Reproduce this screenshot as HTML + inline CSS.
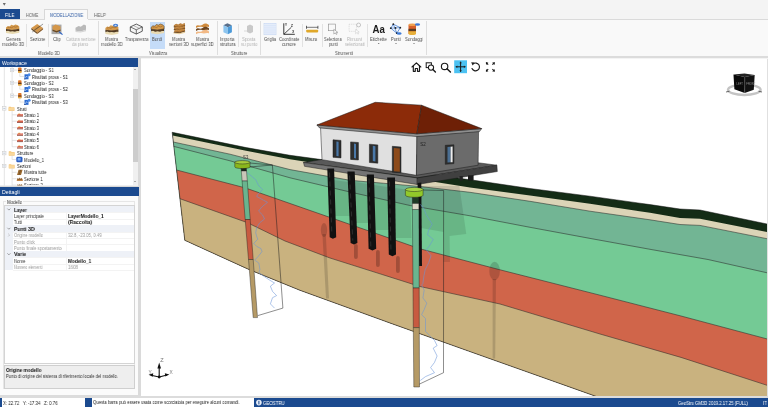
<!DOCTYPE html>
<html><head><meta charset="utf-8">
<style>
*{margin:0;padding:0;box-sizing:border-box}
html,body{width:768px;height:407px;overflow:hidden;background:#f4f4f4;font-family:"Liberation Sans", sans-serif;position:relative}
.a{position:absolute}
.t{position:absolute;white-space:pre;line-height:1;transform-origin:0 50%;will-change:transform}
svg{position:absolute;left:0;top:0;will-change:transform}
</style></head><body>
<!-- title/quick access -->

<!-- tabs -->
<div class="a" style="left:0;top:9.4px;width:19.5px;height:9.9px;background:#1b4a8f"></div>
<div class="a" style="left:44.3px;top:9.4px;width:44.2px;height:10.5px;background:#f9f9f9;border:0.6px solid #d8d8d8;border-bottom:none"></div>
<!-- ribbon -->
<div class="a" style="left:0;top:19.3px;width:768px;height:36.7px;background:#f9f9f9;border-top:0.6px solid #dadada"></div>
<div class="a" style="left:44.9px;top:19px;width:43px;height:1px;background:#f9f9f9"></div>
<div class="a" style="left:149.7px;top:21.6px;width:15.2px;height:27.4px;background:#c5dcf8"></div>
<!-- separators -->
<div class="a" style="left:26.3px;top:24px;width:0.7px;height:23px;background:#e2e2e2"></div>
<div class="a" style="left:47.9px;top:24px;width:0.7px;height:23px;background:#e2e2e2"></div>
<div class="a" style="left:97.8px;top:21px;width:0.8px;height:34px;background:#dedede"></div>
<div class="a" style="left:217px;top:21px;width:0.8px;height:34px;background:#dedede"></div>
<div class="a" style="left:238px;top:24px;width:0.7px;height:23px;background:#e2e2e2"></div>
<div class="a" style="left:260.2px;top:21px;width:0.8px;height:34px;background:#dedede"></div>
<div class="a" style="left:302px;top:24px;width:0.7px;height:23px;background:#e2e2e2"></div>
<div class="a" style="left:321.5px;top:24px;width:0.7px;height:23px;background:#e2e2e2"></div>
<div class="a" style="left:367px;top:24px;width:0.7px;height:23px;background:#e2e2e2"></div>
<div class="a" style="left:425.7px;top:21px;width:0.8px;height:34px;background:#dedede"></div>
<!-- ribbon bottom band -->
<div class="a" style="left:0;top:56px;width:768px;height:2.4px;background:#dcdcdc"></div>
<!-- left panel background -->
<div class="a" style="left:0;top:58.4px;width:141px;height:339px;background:#f0f0f0"></div>
<!-- workspace header -->
<div class="a" style="left:0;top:58.4px;width:138.8px;height:8.3px;background:#1b4a8f"></div>
<!-- tree -->
<div class="a" style="left:0;top:66.7px;width:138.4px;height:118.8px;background:#ffffff"></div>
<div class="a" style="left:132.7px;top:66.7px;width:5.7px;height:118.8px;background:#f0f0f0"></div>
<div class="a" style="left:133.2px;top:89px;width:4.7px;height:73.4px;background:#cdcdcd"></div>
<div class="a" style="left:138.4px;top:58.4px;width:2.6px;height:339px;background:#dadada"></div>
<!-- tree scroll arrows -->
<div class="a" style="left:134.2px;top:69.3px;width:0;height:0;border-left:1.4px solid transparent;border-right:1.4px solid transparent;border-bottom:1.5px solid #666"></div>
<div class="a" style="left:134.2px;top:180.9px;width:0;height:0;border-left:1.4px solid transparent;border-right:1.4px solid transparent;border-top:1.5px solid #666"></div>
<!-- separator between tree & dettagli -->
<div class="a" style="left:0;top:185.5px;width:138.4px;height:1.6px;background:#d8d8d8"></div>
<!-- dettagli header -->
<div class="a" style="left:0;top:187.1px;width:138.8px;height:8.6px;background:#1b4a8f"></div>
<div class="a" style="left:0;top:195.7px;width:138.4px;height:199.3px;background:#fbfbfb"></div>
<!-- groupbox -->
<div class="a" style="left:3.1px;top:201.3px;width:132px;height:188px;border:0.6px solid #e6e6e6"></div>
<div class="a" style="left:6px;top:199px;width:16.5px;height:5px;background:#fbfbfb"></div>
<!-- property grid -->
<div class="a" style="left:4.2px;top:205.2px;width:130.6px;height:158.6px;background:#ffffff;border:0.6px solid #d4d4d4"></div>
<div class="a" style="left:4.8px;top:205.8px;width:8.6px;height:64.4px;background:#eef1f7"></div>
<div class="a" style="left:4.8px;top:205.80px;width:129.4px;height:6.89px;background:#eef1f7"></div>
<div class="a" style="left:13.4px;top:212.44px;width:120.8px;height:0.5px;background:#f3f3f3"></div>
<div class="a" style="left:66.3px;top:212.69px;width:0.5px;height:6.39px;background:#f3f3f3"></div>
<div class="a" style="left:13.4px;top:218.83px;width:120.8px;height:0.5px;background:#f3f3f3"></div>
<div class="a" style="left:66.3px;top:219.08px;width:0.5px;height:6.39px;background:#f3f3f3"></div>
<div class="a" style="left:13.4px;top:225.22px;width:120.8px;height:0.5px;background:#f3f3f3"></div>
<div class="a" style="left:4.8px;top:225.47px;width:129.4px;height:6.39px;background:#eef1f7"></div>
<div class="a" style="left:13.4px;top:231.61px;width:120.8px;height:0.5px;background:#f3f3f3"></div>
<div class="a" style="left:66.3px;top:231.86px;width:0.5px;height:6.39px;background:#f3f3f3"></div>
<div class="a" style="left:13.4px;top:238.00px;width:120.8px;height:0.5px;background:#f3f3f3"></div>
<div class="a" style="left:66.3px;top:238.25px;width:0.5px;height:6.39px;background:#f3f3f3"></div>
<div class="a" style="left:13.4px;top:244.39px;width:120.8px;height:0.5px;background:#f3f3f3"></div>
<div class="a" style="left:66.3px;top:244.64px;width:0.5px;height:6.39px;background:#f3f3f3"></div>
<div class="a" style="left:13.4px;top:250.78px;width:120.8px;height:0.5px;background:#f3f3f3"></div>
<div class="a" style="left:4.8px;top:251.03px;width:129.4px;height:6.39px;background:#eef1f7"></div>
<div class="a" style="left:13.4px;top:257.17px;width:120.8px;height:0.5px;background:#f3f3f3"></div>
<div class="a" style="left:66.3px;top:257.42px;width:0.5px;height:6.39px;background:#f3f3f3"></div>
<div class="a" style="left:13.4px;top:263.56px;width:120.8px;height:0.5px;background:#f3f3f3"></div>
<div class="a" style="left:66.3px;top:263.81px;width:0.5px;height:6.39px;background:#f3f3f3"></div>
<div class="a" style="left:13.4px;top:269.95px;width:120.8px;height:0.5px;background:#f3f3f3"></div>
<svg width="768" height="407" viewBox="0 0 768 407" style="position:absolute;left:0;top:0"><polyline points="7.4,208.60 8.9,210.10 10.4,208.60" fill="none" stroke="#666" stroke-width="0.6"/><polyline points="7.4,227.77 8.9,229.27 10.4,227.77" fill="none" stroke="#666" stroke-width="0.6"/><polyline points="7.4,253.33 8.9,254.83 10.4,253.33" fill="none" stroke="#666" stroke-width="0.6"/><polyline points="8.2,233.66 9.6,235.06 8.2,236.46" fill="none" stroke="#aaa" stroke-width="0.6"/></svg>
<!-- description box -->
<div class="a" style="left:4.2px;top:365px;width:130.6px;height:23.8px;background:#eeeeee;border:0.6px solid #cfcfcf"></div>
<!-- bottom panel band -->
<div class="a" style="left:0;top:395px;width:768px;height:3px;background:#dcdcdc"></div>
<!-- viewport -->
<div class="a" style="left:141px;top:58.5px;width:627px;height:337.5px;background:#ffffff"></div>
<div class="a" style="left:767px;top:58.5px;width:1px;height:337.5px;background:#e0e0e0"></div>
<!-- status bar -->
<div class="a" style="left:0;top:398px;width:768px;height:9px;background:#1b4a8f"></div>
<div class="a" style="left:2px;top:398px;width:82.6px;height:9px;background:#ffffff"></div>
<div class="a" style="left:91.8px;top:398px;width:162.2px;height:9px;background:#ffffff"></div>

<svg width="768" height="407" viewBox="0 0 768 407">
<defs><clipPath id="vp"><rect x="141" y="58.5" width="626" height="337.5"/></clipPath></defs>
<g clip-path="url(#vp)">
<polygon points="172.2,132.3 246.2,147.6 290.0,155.3 474.0,180.3 530.0,188.5 590.0,196.2 650.0,204.6 680.0,209.0 700.0,210.0 768.0,224.2 768.0,470.0 768.0,460.0 640.0,412.0 548.0,379.3 470.0,351.6 390.0,323.0 300.0,290.3 248.8,269.4 184.8,240.3" fill="#142c16"/>
<polygon points="172.6,135.4 246.0,150.8 290.0,159.2 470.0,187.4 530.0,195.5 590.0,203.8 650.0,212.8 680.0,217.9 700.0,218.8 768.0,232.3 768.0,470.0 768.0,460.0 640.0,412.0 548.0,379.3 470.0,351.6 390.0,323.0 300.0,290.3 248.8,269.4 184.8,240.3" fill="#dbd4b7"/>
<polygon points="173.3,142.0 230.0,154.2 290.0,169.6 350.0,180.3 420.0,186.5 470.0,192.3 530.0,201.3 590.0,211.2 650.0,219.8 680.0,224.5 700.0,225.4 768.0,238.9 768.0,470.0 768.0,460.0 640.0,412.0 548.0,379.3 470.0,351.6 390.0,323.0 300.0,290.3 248.8,269.4 184.8,240.3" fill="#72b594"/>
<polygon points="173.8,146.4 230.0,160.8 290.0,177.8 350.0,192.0 410.0,205.5 470.0,215.8 530.0,227.3 590.0,238.4 650.0,249.3 708.0,259.5 768.0,273.0 768.0,470.0 768.0,460.0 640.0,412.0 548.0,379.3 470.0,351.6 390.0,323.0 300.0,290.3 248.8,269.4 184.8,240.3" fill="#74ca95"/>
<polygon points="176.6,170.0 245.0,187.8 420.0,248.8 500.0,269.8 600.0,295.2 681.0,316.0 768.0,339.2 768.0,470.0 768.0,460.0 640.0,412.0 548.0,379.3 470.0,351.6 390.0,323.0 300.0,290.3 248.8,269.4 184.8,240.3" fill="#d0654a"/>
<polygon points="179.9,198.7 247.0,222.5 285.0,241.0 330.0,258.0 420.0,286.5 500.0,304.0 600.0,334.0 681.0,357.4 768.0,385.6 768.0,470.0 768.0,460.0 640.0,412.0 548.0,379.3 470.0,351.6 390.0,323.0 300.0,290.3 248.8,269.4 184.8,240.3" fill="#c9b27f"/>
<polygon points="334.0,180.0 348.0,182.0 349.5,216.0 335.0,216.0" fill="#000" fill-opacity="0.1"/>
<polygon points="355.0,182.0 368.0,184.0 369.5,223.0 356.0,223.0" fill="#000" fill-opacity="0.1"/>
<polygon points="374.0,185.0 388.0,187.0 389.5,230.0 375.0,230.0" fill="#000" fill-opacity="0.1"/>
<polygon points="395.0,188.0 410.0,190.0 411.5,238.0 396.0,238.0" fill="#000" fill-opacity="0.1"/>
<polygon points="421.0,186.0 459.4,186.0 466.3,234.0 449.6,236.0 450.0,262.0 443.5,262.0 443.5,232.0 421.0,228.0" fill="#000" fill-opacity="0.1"/>
<rect x="354" y="244" width="3.8" height="15" rx="1.9" fill="#000" fill-opacity="0.22"/>
<rect x="376" y="250" width="3.8" height="17" rx="1.9" fill="#000" fill-opacity="0.22"/>
<rect x="396" y="256" width="3.8" height="17" rx="1.9" fill="#000" fill-opacity="0.22"/>
<ellipse cx="324" cy="230" rx="3.2" ry="7" fill="#000" fill-opacity="0.16"/>
<polygon points="322.4,234.0 325.8,234.0 329.0,298.5 326.0,298.5" fill="#000" fill-opacity="0.15"/>
<ellipse cx="494.6" cy="271" rx="5.3" ry="9.3" fill="#000" fill-opacity="0.16"/>
<polygon points="492.6,279.0 496.0,279.0 495.2,358.5 492.6,358.5" fill="#000" fill-opacity="0.14"/>
<polyline points="173.3,142.0 230.0,154.2 290.0,169.6 350.0,180.3 420.0,186.5 470.0,192.3 530.0,201.3 590.0,211.2 650.0,219.8 680.0,224.5 700.0,225.4 768.0,238.9" fill="none" stroke="#2a2a2a" stroke-width="0.55"/>
<polyline points="173.8,146.4 230.0,160.8 290.0,177.8 350.0,192.0 410.0,205.5 470.0,215.8 530.0,227.3 590.0,238.4 650.0,249.3 708.0,259.5 768.0,273.0" fill="none" stroke="#2a2a2a" stroke-width="0.55"/>
<polyline points="176.6,170.0 245.0,187.8 420.0,248.8 500.0,269.8 600.0,295.2 681.0,316.0 768.0,339.2" fill="none" stroke="#2a2a2a" stroke-width="0.55"/>
<polyline points="179.9,198.7 247.0,222.5 285.0,241.0 330.0,258.0 420.0,286.5 500.0,304.0 600.0,334.0 681.0,357.4 768.0,385.6" fill="none" stroke="#2a2a2a" stroke-width="0.55"/>
<polyline points="184.8,240.3 248.8,269.4 300.0,290.3 390.0,323.0 470.0,351.6 548.0,379.3 640.0,412.0 768.0,460.0" fill="none" stroke="#222" stroke-width="0.65"/>
<polyline points="172.2,132.3 184.8,240.3" fill="none" stroke="#222" stroke-width="0.65"/>
<polyline points="172.2,132.3 246.2,147.6 290.0,155.3 474.0,180.3 530.0,188.5 590.0,196.2 650.0,204.6 680.0,209.0 700.0,210.0 768.0,224.2" fill="none" stroke="#111" stroke-width="0.5"/>
<g stroke="#1a1a1a" stroke-width="0.5" stroke-linejoin="round">
<polygon points="303.5,162.5 380.0,150.0 496.9,165.2 417.2,177.9" fill="#595959"/>
<polygon points="303.5,162.5 417.2,177.9 417.2,184.5 304.5,166.3" fill="#747474"/>
<polygon points="417.2,177.9 496.9,165.2 497.3,171.5 417.2,184.5" fill="#404040"/>
<polygon points="320.5,127.0 416.9,135.5 416.4,175.3 322.0,159.7" fill="#e0e0e0"/>
<polygon points="416.9,135.5 478.6,131.0 478.1,165.2 416.4,175.3" fill="#6b6b6b"/>
<polygon points="333.0,139.8 341.0,140.4 341.0,157.9 333.0,157.3" fill="#2e2e2e"/>
<polygon points="336.4,141.4 338.6,141.8 338.6,156.3 336.4,155.9" fill="#4a78a8" stroke="none"/>
<polygon points="350.6,141.9 358.4,142.5 358.4,160.0 350.6,159.4" fill="#2e2e2e"/>
<polygon points="354.0,143.5 356.0,143.9 356.0,158.4 354.0,158.0" fill="#4a78a8" stroke="none"/>
<polygon points="369.4,144.2 377.8,144.9 377.8,163.2 369.4,162.5" fill="#2e2e2e"/>
<polygon points="372.8,145.8 375.4,146.3 375.4,161.6 372.8,161.1" fill="#4a78a8" stroke="none"/>
<polygon points="392.3,146.3 401.0,147.0 401.0,172.8 392.3,172.2" fill="#2e2e2e"/>
<polygon points="393.8,148.0 399.8,148.5 399.8,171.8 393.8,171.3" fill="#8c4a1a" stroke="none"/>
<polygon points="445.3,145.3 453.9,144.8 453.9,163.6 445.3,164.3" fill="#2e2e2e"/>
<polygon points="447.5,147.0 450.6,146.8 450.6,162.3 447.5,162.6" fill="#4a6e92" stroke="none"/>
<polygon points="450.6,146.8 452.6,146.6 452.6,162.2 450.6,162.3" fill="#ececec" stroke="none"/>
<polygon points="316.9,125.0 416.9,133.8 481.7,128.6 479.5,131.6 416.9,136.6 319.5,127.9" fill="#8e8e8e"/>
<polygon points="316.9,125.0 375.2,102.3 421.6,105.2 416.9,133.8" fill="#8c2b09"/>
<polygon points="421.6,105.2 481.7,128.6 416.9,133.8" fill="#6e2006"/>
</g>
<text x="0" y="0" font-size="5.4" fill="#202020" font-family="Liberation Sans" transform="translate(420.2,146.1) scale(0.82,1)">S2</text>
<polygon points="327.3,168.5 334.1,168.5 336.2,237.2 332.9,238.8 329.7,237.2" fill="#111"/>
<line x1="329.5" y1="172.5" x2="331.9" y2="234.8" stroke="#4a4a4a" stroke-width="0.5" stroke-dasharray="5,4"/>
<polygon points="347.4,171.5 354.7,171.5 357.4,243.0 354.0,244.6 350.6,243.0" fill="#111"/>
<line x1="349.6" y1="175.5" x2="352.8" y2="240.6" stroke="#4a4a4a" stroke-width="0.5" stroke-dasharray="5,4"/>
<polygon points="366.8,174.5 373.9,174.5 376.2,248.8 372.4,250.4 368.6,248.8" fill="#111"/>
<line x1="369.0" y1="178.5" x2="370.8" y2="246.4" stroke="#4a4a4a" stroke-width="0.5" stroke-dasharray="5,4"/>
<polygon points="387.2,177.5 395.0,177.5 396.0,254.6 392.4,256.2 388.8,254.6" fill="#111"/>
<line x1="389.4" y1="181.5" x2="391.0" y2="252.2" stroke="#4a4a4a" stroke-width="0.5" stroke-dasharray="5,4"/>
<polygon points="417.6,183.0 421.3,182.5 422.0,266.0 418.2,266.0" fill="#111"/>
<polygon points="459.5,176.0 462.8,176.0 462.8,180.6 459.5,180.8" fill="#222"/>
<polygon points="468.0,175.5 473.6,175.0 473.6,180.3 468.0,180.5" fill="#1a1a1a"/>
<polygon points="246.0,315.9 257.5,315.9 282.5,308.2 272.8,164.8" fill="none"/>
<polyline points="249.6,163.0 272.4,165.0 282.9,308.1 257.8,315.6" fill="none" stroke="#1e1e1e" stroke-width="0.5"/>
<polyline points="249.6,167.0 272.4,165.0" fill="none" stroke="#1e1e1e" stroke-width="0.5"/>
<polyline points="245.9,171.8 249.8,174.7 255.7,179.7 258.6,185.6 262.6,189.5 257.7,194.4 256.7,196.4 263.6,200.3 267.5,202.3 261.6,207.2 258.6,211.1 262.6,215.0 264.5,219.0 259.6,222.9 256.7,227.8 255.7,232.7 256.7,236.5 257.8,239.2 253.7,243.4 256.8,246.5 261.0,248.6 262.0,251.7 257.8,256.9 254.7,260.1 258.9,263.2 259.9,269.5 258.9,272.6 263.0,275.7 269.3,279.9 274.5,283.0 270.4,286.2 272.5,291.4 276.6,295.6 272.5,297.7 270.4,303.9 274.5,308.1" fill="none" stroke="#6a95d8" stroke-width="0.55" stroke-linejoin="round"/>
<polyline points="423.0,190.0 443.6,190.5 443.5,372.7 419.0,384.3" fill="none" stroke="#1e1e1e" stroke-width="0.5"/>
<polyline points="420.5,204.3 424.0,209.0 426.3,214.8 432.2,224.2 428.7,230.0 427.5,234.7 433.3,239.4 429.8,245.2 426.3,249.9 431.0,255.7 428.7,262.7 425.2,269.7 424.0,275.5 422.8,283.7 421.6,285.0 424.2,290.2 422.9,297.9 426.8,303.1 424.2,309.5 421.6,314.7 425.5,318.5 425.5,326.3 425.5,331.4 429.4,335.3 434.5,340.5 437.1,345.6 433.2,348.2 437.1,356.0 434.5,362.4 430.6,367.6 434.5,372.7 425.5,376.6 420.3,380.5" fill="none" stroke="#6a95d8" stroke-width="0.55" stroke-linejoin="round"/>
<polygon points="241.0,167.7 246.3,167.7 246.5,171.0 241.3,171.0" fill="#1d2a1d" stroke="#1a1a1a" stroke-width="0.4"/>
<polygon points="241.3,171.0 246.5,171.0 247.3,181.0 242.1,181.0" fill="#c9c6b8" stroke="#1a1a1a" stroke-width="0.4"/>
<polygon points="242.1,181.0 247.3,181.0 250.2,219.5 245.2,219.5" fill="#6ab48e" stroke="#1a1a1a" stroke-width="0.4"/>
<polygon points="245.2,219.5 250.2,219.5 253.2,259.5 248.5,259.5" fill="#c85a40" stroke="#1a1a1a" stroke-width="0.4"/>
<polygon points="248.5,259.5 253.2,259.5 257.5,317.6 253.2,317.6" fill="#b59a66" stroke="#1a1a1a" stroke-width="0.4"/>
<polygon points="412.3,197.2 418.9,197.2 418.9,203.5 412.3,203.5" fill="#1f3a25" stroke="#1a1a1a" stroke-width="0.4"/>
<polygon points="412.3,203.5 418.9,203.5 418.9,210.0 412.4,210.0" fill="#dcd8c6" stroke="#1a1a1a" stroke-width="0.4"/>
<polygon points="412.4,209.5 418.9,209.5 419.2,288.0 413.0,288.0" fill="#6ab58f" stroke="#1a1a1a" stroke-width="0.4"/>
<polygon points="413.0,288.0 419.2,288.0 419.3,327.6 413.3,327.6" fill="#c85a40" stroke="#1a1a1a" stroke-width="0.4"/>
<polygon points="413.3,327.6 419.3,327.6 419.5,387.0 413.8,387.0" fill="#b59a66" stroke="#1a1a1a" stroke-width="0.4"/>
<path d="M234.8,162.28 L234.8,166.92000000000002 A7.599999999999994,1.68 0 0 0 250,166.92000000000002 L250,162.28 Z" fill="#8ab61c" stroke="#1a1a1a" stroke-width="0.45"/>
<ellipse cx="242.4" cy="162.28" rx="7.599999999999994" ry="1.68" fill="#a8cc3c" stroke="#1a1a1a" stroke-width="0.45"/>
<path d="M405.4,189.479 L405.4,195.221 A8.850000000000023,2.079000000000001 0 0 0 423.1,195.221 L423.1,189.479 Z" fill="#92c92a" stroke="#1a1a1a" stroke-width="0.45"/>
<ellipse cx="414.25" cy="189.479" rx="8.850000000000023" ry="2.079000000000001" fill="#a6d443" stroke="#1a1a1a" stroke-width="0.45"/>
<text x="0" y="0" font-size="5" fill="#3a3a3a" font-family="Liberation Sans" transform="translate(243.1,158.8) scale(0.85,1)">S3</text>
</g>
</svg>

<svg width="768" height="407" viewBox="0 0 768 407">
<g transform="translate(6.0,24.4) scale(1.02,0.92)"><polygon points="0.00,3.40 1.80,1.80 3.60,2.20 5.20,0.50 7.40,1.10 9.20,0.00 11.60,0.80 13.00,2.40 13.00,5.00 6.50,6.20 0.00,5.20" fill="#d49a4c"/><polygon points="0.00,5.00 6.50,6.00 13.00,4.80 13.00,7.40 6.50,8.60 0.00,7.60" fill="#4a3620"/><polygon points="0.00,7.40 2.00,7.00 4.00,7.80 6.50,7.40 9.00,8.00 11.00,7.20 13.00,7.20 13.00,9.20 6.50,10.40 0.00,9.40" fill="#e8d9b0"/><polyline points="1.50,3.40 3.50,3.00 5.50,3.60 7.50,2.40 9.50,3.00 11.50,2.20" fill="none" stroke="#9a6226" stroke-width="0.6"/><polyline points="0.50,6.20 3.00,5.60 5.00,6.60 8.00,5.80 10.50,6.40 12.50,5.60" fill="none" stroke="#7a5228" stroke-width="0.5"/></g>
<g transform="translate(31.3,24) scale(0.98,1.0)"><polygon points="0.00,4.00 6.00,0.00 12.00,4.00 6.00,8.50" fill="#d4974a"/><polygon points="0.00,4.00 6.00,8.50 6.00,10.00 0.00,5.50" fill="#6b4a22"/><polygon points="6.00,8.50 12.00,4.00 12.00,5.50 6.00,10.00" fill="#8a5a25"/><line x1="1" y1="8" x2="12" y2="0" stroke="#555" stroke-width="0.6"/><line x1="3" y1="6" x2="9" y2="2" stroke="#6b4a22" stroke-width="0.6"/></g>
<g transform="translate(51.5,23.6) scale(1.0,1.0)"><rect x="0" y="1" width="10" height="9.5" fill="#a9a9a9"/><polygon points="1.00,3.00 4.00,1.00 7.00,2.00 9.00,3.00 9.00,6.00 5.00,7.50 1.00,6.00" fill="#d4974a"/><polygon points="1.00,6.00 5.00,7.50 9.00,6.00 9.00,7.50 5.00,9.00 1.00,7.50" fill="#6b4a22"/><line x1="7.5" y1="8" x2="11" y2="11" stroke="#2a63c8" stroke-width="1.2"/></g>
<g transform="translate(75.5,24) scale(1.05,0.95)"><polygon points="0.00,4.00 3.00,2.00 5.00,3.00 8.00,0.50 10.00,1.50 10.00,6.00 5.00,8.00 0.00,7.00" fill="#b9b9b9"/><polygon points="0.00,7.00 5.00,8.00 10.00,6.00 10.00,7.50 5.00,9.00 0.00,8.50" fill="#d5d5d5"/></g>
<g transform="translate(105.4,24.8) scale(1.0,0.97)"><polygon points="0.00,3.40 1.80,1.80 3.60,2.20 5.20,0.50 7.40,1.10 9.20,0.00 11.60,0.80 13.00,2.40 13.00,5.00 6.50,6.20 0.00,5.20" fill="#d49a4c"/><polygon points="0.00,5.00 6.50,6.00 13.00,4.80 13.00,7.40 6.50,8.60 0.00,7.60" fill="#4a3620"/><polygon points="0.00,7.40 2.00,7.00 4.00,7.80 6.50,7.40 9.00,8.00 11.00,7.20 13.00,7.20 13.00,9.20 6.50,10.40 0.00,9.40" fill="#e8d9b0"/><polyline points="1.50,3.40 3.50,3.00 5.50,3.60 7.50,2.40 9.50,3.00 11.50,2.20" fill="none" stroke="#9a6226" stroke-width="0.6"/><polyline points="0.50,6.20 3.00,5.60 5.00,6.60 8.00,5.80 10.50,6.40 12.50,5.60" fill="none" stroke="#7a5228" stroke-width="0.5"/></g>
<ellipse cx="115.6" cy="25.3" rx="2.6" ry="1.5" fill="#3d7bd8"/><ellipse cx="115.6" cy="25.3" rx="1.2" ry="0.6" fill="#cfe0fa"/>
<g transform="translate(130.3,23.6) scale(1.0,0.95)"><polygon points="0.00,3.50 6.00,0.50 12.00,3.50 12.00,8.00 6.00,11.00 0.00,8.00" fill="#f4f4f4" stroke="#333" stroke-width="0.8"/><polyline points="0.00,3.50 6.00,6.50 12.00,3.50" fill="none" stroke="#333" stroke-width="0.7"/><line x1="6" y1="6.5" x2="6" y2="11" stroke="#333" stroke-width="0.7"/><polyline points="3.00,2.00 9.00,5.00" fill="none" stroke="#777" stroke-width="0.5"/></g>
<g transform="translate(151.1,24.0) scale(1.0,0.98)"><polygon points="0.00,3.40 1.80,1.80 3.60,2.20 5.20,0.50 7.40,1.10 9.20,0.00 11.60,0.80 13.00,2.40 13.00,5.00 6.50,6.20 0.00,5.20" fill="#d49a4c" stroke="#4a3218" stroke-width="0.5"/><polygon points="0.00,5.00 6.50,6.00 13.00,4.80 13.00,7.40 6.50,8.60 0.00,7.60" fill="#4a3620"/><polygon points="0.00,7.40 2.00,7.00 4.00,7.80 6.50,7.40 9.00,8.00 11.00,7.20 13.00,7.20 13.00,9.20 6.50,10.40 0.00,9.40" fill="#e8d9b0"/><polyline points="1.50,3.40 3.50,3.00 5.50,3.60 7.50,2.40 9.50,3.00 11.50,2.20" fill="none" stroke="#9a6226" stroke-width="0.6"/><polyline points="0.50,6.20 3.00,5.60 5.00,6.60 8.00,5.80 10.50,6.40 12.50,5.60" fill="none" stroke="#7a5228" stroke-width="0.5"/></g>
<g transform="translate(173,23) scale(1.05,1.0)"><polygon points="0.80,2.20 3.00,0.80 5.00,1.40 7.00,0.20 9.00,0.90 11.20,0.00 11.50,2.80 6.00,4.60 0.80,4.00" fill="#b07534"/><polyline points="1.50,2.60 4.00,1.80 6.00,2.40 8.50,1.60 10.80,1.20" fill="none" stroke="#d9a25a" stroke-width="0.6"/><polyline points="0.80,4.00 6.00,4.60 11.50,2.80" fill="none" stroke="#4e3216" stroke-width="0.9"/><polygon points="1.10,4.90 3.00,3.50 5.00,4.10 7.00,2.90 9.00,3.60 11.20,2.70 11.50,5.50 6.00,7.30 0.80,6.70" fill="#b07534"/><polyline points="1.50,5.30 4.00,4.50 6.00,5.10 8.50,4.30 10.80,3.90" fill="none" stroke="#d9a25a" stroke-width="0.6"/><polyline points="0.80,6.70 6.00,7.30 11.50,5.50" fill="none" stroke="#4e3216" stroke-width="0.9"/><polygon points="1.40,7.60 3.00,6.20 5.00,6.80 7.00,5.60 9.00,6.30 11.20,5.40 11.50,8.20 6.00,10.00 0.80,9.40" fill="#b07534"/><polyline points="1.50,8.00 4.00,7.20 6.00,7.80 8.50,7.00 10.80,6.60" fill="none" stroke="#d9a25a" stroke-width="0.6"/><polyline points="0.80,9.40 6.00,10.00 11.50,8.20" fill="none" stroke="#4e3216" stroke-width="0.9"/><polygon points="0.50,9.60 6.00,10.30 11.50,8.60 11.50,9.80 6.00,11.20 0.50,10.60" fill="#e8cf9e"/></g>
<g transform="translate(196,23.6) scale(1.0,0.95)"><path d="M0,2.6 C2,0.2 4,3.4 6.5,1.2 S11,0.0 13,1.6 L13,3.8 C11,2.4 9,4.2 6.5,3.6 S2,3.2 0,4.6 Z" fill="#cf8a3c"/><path d="M0,5.9 C2,3.5 4,6.699999999999999 6.5,4.5 S11,3.3 13,4.9 L13,7.1 C11,5.699999999999999 9,7.5 6.5,6.9 S2,6.5 0,7.8999999999999995 Z" fill="#6e4620"/><path d="M0,9.2 C2,6.8 4,10.0 6.5,7.8 S11,6.6 13,8.2 L13,10.399999999999999 C11,9.0 9,10.8 6.5,10.2 S2,9.8 0,11.2 Z" fill="#f2b985"/></g>
<g transform="translate(223.4,23.2) scale(1.0,1.0)"><polygon points="0.00,2.00 4.00,0.00 8.50,2.00 4.50,4.00" fill="#5a6f8a"/><polygon points="0.00,2.00 4.50,4.00 4.50,11.00 0.00,9.00" fill="#8cc4ee"/><polygon points="4.50,4.00 8.50,2.00 8.50,9.00 4.50,11.00" fill="#4d9ad8"/></g>
<g transform="translate(244,24) scale(1.0,1.0)"><polygon points="3.00,2.00 6.00,0.50 9.00,2.00 9.00,8.00 6.00,9.50 3.00,8.00" fill="#c9c9c9"/><line x1="0" y1="7" x2="4" y2="7" stroke="#ccc" stroke-width="0.7"/></g>
<g transform="translate(264,23.3) scale(1.0,1.0)"><rect x="0" y="0" width="12" height="11.5" fill="#fbfcff" stroke="#b5cbee" stroke-width="0.5"/><line x1="2" y1="0" x2="2" y2="11.5" stroke="#bcd0f0" stroke-width="0.5"/><line x1="0" y1="1.92" x2="12" y2="1.92" stroke="#bcd0f0" stroke-width="0.5"/><line x1="4" y1="0" x2="4" y2="11.5" stroke="#bcd0f0" stroke-width="0.5"/><line x1="0" y1="3.84" x2="12" y2="3.84" stroke="#bcd0f0" stroke-width="0.5"/><line x1="6" y1="0" x2="6" y2="11.5" stroke="#bcd0f0" stroke-width="0.5"/><line x1="0" y1="5.76" x2="12" y2="5.76" stroke="#bcd0f0" stroke-width="0.5"/><line x1="8" y1="0" x2="8" y2="11.5" stroke="#bcd0f0" stroke-width="0.5"/><line x1="0" y1="7.68" x2="12" y2="7.68" stroke="#bcd0f0" stroke-width="0.5"/><line x1="10" y1="0" x2="10" y2="11.5" stroke="#bcd0f0" stroke-width="0.5"/><line x1="0" y1="9.6" x2="12" y2="9.6" stroke="#bcd0f0" stroke-width="0.5"/></g>
<g transform="translate(282.8,23.3) scale(1.0,1.0)"><polyline points="1.00,0.00 1.00,11.00 12.00,11.00" fill="none" stroke="#222" stroke-width="0.9"/><line x1="1" y1="11" x2="8.5" y2="4" stroke="#222" stroke-width="0.8"/><text x="2.2" y="2.6" font-size="3" fill="#222" font-family="Liberation Sans" font-weight="700">Y</text><text x="8.2" y="3.8" font-size="3" fill="#222" font-family="Liberation Sans" font-weight="700">Z</text><text x="9.5" y="10.2" font-size="3" fill="#222" font-family="Liberation Sans" font-weight="700">X</text></g>
<g transform="translate(306.2,25.8) scale(1.0,1.0)"><line x1="0.3" y1="0" x2="0.3" y2="3" stroke="#222" stroke-width="0.7"/><line x1="11.7" y1="0" x2="11.7" y2="3" stroke="#222" stroke-width="0.7"/><line x1="0.3" y1="1.5" x2="11.7" y2="1.5" stroke="#222" stroke-width="0.6"/><rect x="0" y="4" width="12" height="2.6" rx="0.8" fill="#e0a82a"/></g>
<g transform="translate(327.8,23.6) scale(1.0,0.95)"><rect x="0.5" y="0.5" width="7" height="7" fill="none" stroke="#888" stroke-width="0.6"/><polygon points="6.00,6.00 6.00,11.00 7.30,9.80 8.50,11.50 9.30,11.00 8.20,9.30 10.00,9.20" fill="#fff" stroke="#777" stroke-width="0.5"/></g>
<g transform="translate(348.6,22.8) scale(1.0,0.95)"><rect x="0.5" y="1.5" width="7.5" height="7.5" fill="none" stroke="#c8c8c8" stroke-width="0.6" stroke-dasharray="1,0.8"/><circle cx="10" cy="2.3" r="2" fill="none" stroke="#bdbdbd" stroke-width="0.9"/><polygon points="7.00,7.00 7.00,11.50 8.20,10.30 9.30,12.00 10.00,11.60 9.00,9.80 10.60,9.70" fill="#fff" stroke="#c5c5c5" stroke-width="0.5"/></g>
<text x="0" y="0" font-size="10.4" font-weight="700" fill="#1a1a1a" font-family="Liberation Sans" transform="translate(372.6,32.6) scale(0.93,1)">Aa</text>
<g transform="translate(390.3,23.2) scale(1.0,1.0)"><polyline points="3.00,1.00 10.00,4.50 6.50,10.00 0.50,5.00 3.00,1.00 6.50,10.00" fill="none" stroke="#2c6fd0" stroke-width="0.7"/><line x1="0.5" y1="5" x2="10" y2="4.5" stroke="#2c6fd0" stroke-width="0.6"/><circle cx="3" cy="1" r="0.9" fill="#222"/><circle cx="10" cy="4.5" r="0.9" fill="#222"/><circle cx="6.5" cy="10" r="0.9" fill="#222"/><circle cx="0.5" cy="5" r="0.9" fill="#222"/><circle cx="5.2" cy="4.8" r="0.9" fill="#222"/><ellipse cx="8.8" cy="10.3" rx="2.5" ry="1.3" fill="#3d7bd8"/></g>
<g transform="translate(408.5,23.3) scale(1.0,1.0)"><rect x="0" y="1.5" width="7.5" height="9" fill="#d8602a"/><rect x="0" y="5.5" width="7.5" height="2.5" fill="#5a3a22"/><rect x="0" y="8" width="7.5" height="2.5" fill="#e8b03a"/><ellipse cx="3.75" cy="1.5" rx="3.75" ry="1.3" fill="#f0a050"/><ellipse cx="3.75" cy="10.5" rx="3.75" ry="1.3" fill="#e8b03a"/><ellipse cx="9" cy="1.2" rx="2.6" ry="1.3" fill="#3d7bd8"/></g>
<polygon points="377.80,42.90 379.60,42.90 378.70,43.90" fill="#555"/>
<polygon points="395.10,42.90 396.90,42.90 396.00,43.90" fill="#555"/>
<polygon points="413.10,42.90 414.90,42.90 414.00,43.90" fill="#555"/>
<rect x="454.2" y="60.3" width="12.8" height="12.9" fill="#4cc2f2"/>
<polyline points="412.00,67.00 416.40,62.80 420.80,67.00" fill="none" stroke="#1a1a1a" stroke-width="1.15" stroke-linejoin="round" stroke-linecap="round"/>
<polyline points="413.30,66.00 413.30,71.30 415.30,71.30 415.30,68.50 417.50,68.50 417.50,71.30 419.50,71.30 419.50,66.00" fill="none" stroke="#1a1a1a" stroke-width="1.15" stroke-linejoin="round" stroke-linecap="round"/>
<rect x="426.2" y="62.8" width="5.2" height="4.8" fill="none" stroke="#1a1a1a" stroke-width="1"/>
<circle cx="431" cy="67.6" r="2.6" fill="#fff" stroke="#1a1a1a" stroke-width="1.05"/>
<line x1="432.9" y1="69.5" x2="435.4" y2="72" stroke="#1a1a1a" stroke-width="1.4" stroke-linecap="round"/>
<circle cx="444.6" cy="66.4" r="3.2" fill="none" stroke="#1a1a1a" stroke-width="1.15"/>
<line x1="447" y1="68.8" x2="450.4" y2="72" stroke="#1a1a1a" stroke-width="1.5" stroke-linecap="round"/>
<line x1="455.8" y1="66.8" x2="465.4" y2="66.8" stroke="#1a1a1a" stroke-width="1"/>
<line x1="460.6" y1="61.8" x2="460.6" y2="71.8" stroke="#1a1a1a" stroke-width="1"/>
<polygon points="455.60,66.80 457.30,65.60 457.30,68.00" fill="#222"/>
<polygon points="465.60,66.80 463.90,65.60 463.90,68.00" fill="#222"/>
<polygon points="460.60,61.60 459.40,63.30 461.80,63.30" fill="#222"/>
<polygon points="460.60,72.00 459.40,70.30 461.80,70.30" fill="#222"/>
<path d="M473.2,63.8 A3.9,3.9 0 1 1 472,68.5" fill="none" stroke="#1a1a1a" stroke-width="1.15" stroke-linejoin="round" stroke-linecap="round"/>
<polygon points="471.20,62.20 474.60,62.60 472.60,65.40" fill="#222"/>
<polygon points="486.00,62.50 488.40,62.50 486.00,64.90" fill="#1a1a1a"/>
<line x1="486" y1="62.5" x2="488.2" y2="64.7" stroke="#1a1a1a" stroke-width="1.1"/>
<polygon points="494.60,62.50 492.20,62.50 494.60,64.90" fill="#1a1a1a"/>
<line x1="494.6" y1="62.5" x2="492.40000000000003" y2="64.7" stroke="#1a1a1a" stroke-width="1.1"/>
<polygon points="486.00,71.40 488.40,71.40 486.00,69.00" fill="#1a1a1a"/>
<line x1="486" y1="71.4" x2="488.2" y2="69.2" stroke="#1a1a1a" stroke-width="1.1"/>
<polygon points="494.60,71.40 492.20,71.40 494.60,69.00" fill="#1a1a1a"/>
<line x1="494.6" y1="71.4" x2="492.40000000000003" y2="69.2" stroke="#1a1a1a" stroke-width="1.1"/>
<ellipse cx="744.3" cy="89.8" rx="16.3" ry="5.2" fill="none" stroke="#c4c4c4" stroke-width="2.4"/>
<polygon points="733.50,74.60 744.50,73.50 754.70,75.00 744.80,77.00" fill="#222"/>
<polygon points="733.50,74.60 744.80,77.00 744.70,93.00 734.40,89.20" fill="#0a0a0a"/>
<polygon points="744.80,77.00 754.70,75.00 753.80,89.70 744.70,93.00" fill="#111"/>
<line x1="744.8" y1="77" x2="744.7" y2="93" stroke="#777" stroke-width="0.4"/>
<text x="736.5" y="85" font-size="2.6" fill="#999" font-family="Liberation Sans">LEFT</text>
<text x="746.3" y="85" font-size="2.6" fill="#999" font-family="Liberation Sans">FRONT</text>
<polyline points="726.00,92.00 729.50,91.20" stroke="#333" stroke-width="0.7"/>
<polyline points="758.50,91.20 762.00,92.00" stroke="#333" stroke-width="0.7"/>
<line x1="159.2" y1="377" x2="159.2" y2="366" stroke="#111" stroke-width="1.1"/>
<polygon points="159.20,362.60 157.40,368.60 161.00,368.60" fill="#111"/>
<line x1="159.2" y1="377" x2="151" y2="375.2" stroke="#111" stroke-width="1.1"/>
<polygon points="148.60,374.80 153.20,373.30 152.80,376.80" fill="#111"/>
<line x1="159.2" y1="377" x2="167" y2="375" stroke="#111" stroke-width="1.1"/>
<polygon points="169.40,374.40 164.80,373.20 165.30,376.60" fill="#111"/>
<circle cx="159.2" cy="377" r="1.4" fill="#111"/>
<text x="160.2" y="362.3" font-size="5.6" fill="#777" font-family="Liberation Sans">Z</text>
<text x="148.6" y="373.8" font-size="4.8" fill="#777" font-family="Liberation Sans">Y</text>
<text x="169.6" y="374" font-size="4.8" fill="#777" font-family="Liberation Sans">X</text>
<polygon points="2.8,3.1 5.8,3.1 4.3,5.8" fill="#6a6a6a"/>
<circle cx="258.9" cy="402.6" r="2.8" fill="#e8eef8"/><rect x="258.4" y="400.8" width="1" height="3.6" fill="#1b4a8f"/>
</svg>
<svg width="768" height="407" viewBox="0 0 768 407"><defs><clipPath id="tc"><rect x="0" y="66.7" width="132.7" height="118.8"/></clipPath></defs><g clip-path="url(#tc)">
<line x1="4.3" y1="66.7" x2="4.3" y2="186" stroke="#d0d0d0" stroke-width="0.6" fill="none"/>
<line x1="12.1" y1="66.7" x2="12.1" y2="95.66" stroke="#d0d0d0" stroke-width="0.6" fill="none"/>
<rect x="10.40" y="68.40" width="3.4" height="3.4" fill="#f7f7f7" stroke="#c8c8c8" stroke-width="0.5"/><line x1="11.10" y1="70.10" x2="13.10" y2="70.10" stroke="#8aa0c0" stroke-width="0.5"/>
<line x1="13.8" y1="70.10" x2="17.8" y2="70.10" stroke="#d0d0d0" stroke-width="0.6" fill="none"/>
<rect x="18.1" y="67.50" width="3.4" height="5.2" rx="0.8" fill="#e0782a"/><rect x="18.1" y="69.90" width="3.4" height="1.3" fill="#5a3520"/><rect x="18.1" y="71.20" width="3.4" height="1.5" fill="#e8b040"/>
<polyline points="19.80,72.90 19.80,76.49 24.00,76.49" stroke="#d0d0d0" stroke-width="0.6" fill="none"/>
<rect x="24.5" y="74.29" width="4" height="5" fill="#2a6ad0"/><polyline points="25.30,78.29 26.50,76.09 27.50,77.29" fill="none" stroke="#fff" stroke-width="0.5"/><circle cx="29.10" cy="74.69" r="1.5" fill="#4a8ae8"/><rect x="24.2" y="78.49" width="1.2" height="0.9" fill="#1a3a80"/>
<rect x="10.40" y="81.18" width="3.4" height="3.4" fill="#f7f7f7" stroke="#c8c8c8" stroke-width="0.5"/><line x1="11.10" y1="82.88" x2="13.10" y2="82.88" stroke="#8aa0c0" stroke-width="0.5"/>
<line x1="13.8" y1="82.88" x2="17.8" y2="82.88" stroke="#d0d0d0" stroke-width="0.6" fill="none"/>
<rect x="18.1" y="80.28" width="3.4" height="5.2" rx="0.8" fill="#e0782a"/><rect x="18.1" y="82.68" width="3.4" height="1.3" fill="#5a3520"/><rect x="18.1" y="83.98" width="3.4" height="1.5" fill="#e8b040"/>
<polyline points="19.80,85.68 19.80,89.27 24.00,89.27" stroke="#d0d0d0" stroke-width="0.6" fill="none"/>
<rect x="24.5" y="87.07" width="4" height="5" fill="#2a6ad0"/><polyline points="25.30,91.07 26.50,88.87 27.50,90.07" fill="none" stroke="#fff" stroke-width="0.5"/><circle cx="29.10" cy="87.47" r="1.5" fill="#4a8ae8"/><rect x="24.2" y="91.27" width="1.2" height="0.9" fill="#1a3a80"/>
<rect x="10.40" y="93.96" width="3.4" height="3.4" fill="#f7f7f7" stroke="#c8c8c8" stroke-width="0.5"/><line x1="11.10" y1="95.66" x2="13.10" y2="95.66" stroke="#8aa0c0" stroke-width="0.5"/>
<line x1="13.8" y1="95.66" x2="17.8" y2="95.66" stroke="#d0d0d0" stroke-width="0.6" fill="none"/>
<rect x="18.1" y="93.06" width="3.4" height="5.2" rx="0.8" fill="#e0782a"/><rect x="18.1" y="95.46" width="3.4" height="1.3" fill="#5a3520"/><rect x="18.1" y="96.76" width="3.4" height="1.5" fill="#e8b040"/>
<polyline points="19.80,98.46 19.80,102.05 24.00,102.05" stroke="#d0d0d0" stroke-width="0.6" fill="none"/>
<rect x="24.5" y="99.85" width="4" height="5" fill="#2a6ad0"/><polyline points="25.30,103.85 26.50,101.65 27.50,102.85" fill="none" stroke="#fff" stroke-width="0.5"/><circle cx="29.10" cy="100.25" r="1.5" fill="#4a8ae8"/><rect x="24.2" y="104.05" width="1.2" height="0.9" fill="#1a3a80"/>
<rect x="2.60" y="106.74" width="3.4" height="3.4" fill="#f7f7f7" stroke="#c8c8c8" stroke-width="0.5"/><line x1="3.30" y1="108.44" x2="5.30" y2="108.44" stroke="#8aa0c0" stroke-width="0.5"/>
<path d="M8.6,106.64 h2.2 l0.6,0.7 h3 v3.6 h-5.8 z" fill="#f6c87c"/><rect x="8.6" y="107.84" width="5.8" height="2.6" fill="#f9d79a"/>
<line x1="12.1" y1="110.44" x2="12.1" y2="146.78" stroke="#d0d0d0" stroke-width="0.6" fill="none"/>
<line x1="12.1" y1="114.83" x2="16.8" y2="114.83" stroke="#d0d0d0" stroke-width="0.6" fill="none"/>
<path d="M17,115.03 q1.5,-1.6 3,-1 q1.6,0.4 3,0 v1.6 h-6 z" fill="#d9604a"/><path d="M18,114.23 q1,-0.8 2.2,-0.4" fill="none" stroke="#f0c040" stroke-width="0.5"/><rect x="17" y="115.73" width="6" height="0.8" fill="#8a3a2a"/>
<line x1="12.1" y1="121.22" x2="16.8" y2="121.22" stroke="#d0d0d0" stroke-width="0.6" fill="none"/>
<path d="M17,121.42 q1.5,-1.6 3,-1 q1.6,0.4 3,0 v1.6 h-6 z" fill="#d9604a"/><path d="M18,120.62 q1,-0.8 2.2,-0.4" fill="none" stroke="#f0c040" stroke-width="0.5"/><rect x="17" y="122.12" width="6" height="0.8" fill="#8a3a2a"/>
<line x1="12.1" y1="127.61" x2="16.8" y2="127.61" stroke="#d0d0d0" stroke-width="0.6" fill="none"/>
<path d="M17,127.81 q1.5,-1.6 3,-1 q1.6,0.4 3,0 v1.6 h-6 z" fill="#d9604a"/><path d="M18,127.01 q1,-0.8 2.2,-0.4" fill="none" stroke="#f0c040" stroke-width="0.5"/><rect x="17" y="128.51" width="6" height="0.8" fill="#8a3a2a"/>
<line x1="12.1" y1="134.00" x2="16.8" y2="134.00" stroke="#d0d0d0" stroke-width="0.6" fill="none"/>
<path d="M17,134.20 q1.5,-1.6 3,-1 q1.6,0.4 3,0 v1.6 h-6 z" fill="#d9604a"/><path d="M18,133.40 q1,-0.8 2.2,-0.4" fill="none" stroke="#f0c040" stroke-width="0.5"/><rect x="17" y="134.90" width="6" height="0.8" fill="#8a3a2a"/>
<line x1="12.1" y1="140.39" x2="16.8" y2="140.39" stroke="#d0d0d0" stroke-width="0.6" fill="none"/>
<path d="M17,140.59 q1.5,-1.6 3,-1 q1.6,0.4 3,0 v1.6 h-6 z" fill="#d9604a"/><path d="M18,139.79 q1,-0.8 2.2,-0.4" fill="none" stroke="#f0c040" stroke-width="0.5"/><rect x="17" y="141.29" width="6" height="0.8" fill="#8a3a2a"/>
<line x1="12.1" y1="146.78" x2="16.8" y2="146.78" stroke="#d0d0d0" stroke-width="0.6" fill="none"/>
<path d="M17,146.98 q1.5,-1.6 3,-1 q1.6,0.4 3,0 v1.6 h-6 z" fill="#d9604a"/><path d="M18,146.18 q1,-0.8 2.2,-0.4" fill="none" stroke="#f0c040" stroke-width="0.5"/><rect x="17" y="147.68" width="6" height="0.8" fill="#8a3a2a"/>
<rect x="2.60" y="151.47" width="3.4" height="3.4" fill="#f7f7f7" stroke="#c8c8c8" stroke-width="0.5"/><line x1="3.30" y1="153.17" x2="5.30" y2="153.17" stroke="#8aa0c0" stroke-width="0.5"/>
<path d="M8.8,151.37 h2.2 l0.6,0.7 h3 v3.6 h-5.8 z" fill="#f6c87c"/><rect x="8.8" y="152.57" width="5.8" height="2.6" fill="#f9d79a"/>
<polyline points="12.10,155.17 12.10,159.56 16.00,159.56" stroke="#d0d0d0" stroke-width="0.6" fill="none"/>
<rect x="16.3" y="156.86" width="6.2" height="5.4" rx="1.3" fill="#2a5cc0"/>
<rect x="17.6" y="157.96" width="3" height="2.6" fill="#7fb0f0"/>
<rect x="2.60" y="164.25" width="3.4" height="3.4" fill="#f7f7f7" stroke="#c8c8c8" stroke-width="0.5"/><line x1="3.30" y1="165.95" x2="5.30" y2="165.95" stroke="#8aa0c0" stroke-width="0.5"/>
<path d="M8.8,164.15 h2.2 l0.6,0.7 h3 v3.6 h-5.8 z" fill="#f6c87c"/><rect x="8.8" y="165.35" width="5.8" height="2.6" fill="#f9d79a"/>
<line x1="12.1" y1="167.95" x2="12.1" y2="190" stroke="#d0d0d0" stroke-width="0.6" fill="none"/>
<line x1="12.1" y1="172.34" x2="16.5" y2="172.34" stroke="#d0d0d0" stroke-width="0.6" fill="none"/>
<line x1="12.1" y1="178.73" x2="16.5" y2="178.73" stroke="#d0d0d0" stroke-width="0.6" fill="none"/>
<line x1="12.1" y1="185.12" x2="16.5" y2="185.12" stroke="#d0d0d0" stroke-width="0.6" fill="none"/>
<polygon points="17.00,174.94 18.60,169.74 22.60,169.74 21.00,174.94" fill="#9a6a30"/>
<line x1="19" y1="174.74" x2="20.6" y2="169.94" stroke="#5a3a18" stroke-width="0.5"/>
<path d="M16.8,180.33 l1,-2.6 l1,1.2 l1,-1.4 l1,1.4 l1,-1.2 l1,2.6 z" fill="#8a5a28"/>
<rect x="16.8" y="179.73" width="6" height="1.2" fill="#c08040"/>
<path d="M16.8,186.72 l1,-2.6 l1,1.2 l1,-1.4 l1,1.4 l1,-1.2 l1,2.6 z" fill="#8a5a28"/>
<rect x="16.8" y="186.12" width="6" height="1.2" fill="#c08040"/>
</g></svg>

<div class="t" style="left:4.92px;top:13px;font-size:5.2px;font-weight:400;color:#ffffff;transform:scaleX(0.853)">FILE</div>
<div class="t" style="left:25.63px;top:13px;font-size:5.2px;font-weight:400;color:#666;transform:scaleX(0.799)">HOME</div>
<div class="t" style="left:49.73px;top:13px;font-size:5.2px;font-weight:400;color:#3a64a8;transform:scaleX(0.815)">MODELLAZIONE</div>
<div class="t" style="left:93.82px;top:13px;font-size:5.2px;font-weight:400;color:#666;transform:scaleX(0.882)">HELP</div>
<div class="t" style="left:5.62px;top:37px;font-size:5.6px;font-weight:400;color:#505050;transform:scaleX(0.790)">Genera</div>
<div class="t" style="left:1.82px;top:42px;font-size:5.6px;font-weight:400;color:#505050;transform:scaleX(0.790)">modello 3D</div>
<div class="t" style="left:29.53px;top:37px;font-size:5.6px;font-weight:400;color:#505050;transform:scaleX(0.759)">Sezione</div>
<div class="t" style="left:52.82px;top:37px;font-size:5.6px;font-weight:400;color:#505050;transform:scaleX(0.816)">Clip</div>
<div class="t" style="left:65.63px;top:37px;font-size:5.6px;font-weight:400;color:#b4b4b4;transform:scaleX(0.754)">Cattura sezione</div>
<div class="t" style="left:72.31px;top:42px;font-size:5.6px;font-weight:400;color:#b4b4b4;transform:scaleX(0.754)">da piano</div>
<div class="t" style="left:105.03px;top:37px;font-size:5.6px;font-weight:400;color:#505050;transform:scaleX(0.768)">Mostra</div>
<div class="t" style="left:100.73px;top:42px;font-size:5.6px;font-weight:400;color:#505050;transform:scaleX(0.768)">modello 3D</div>
<div class="t" style="left:125.03px;top:37px;font-size:5.6px;font-weight:400;color:#505050;transform:scaleX(0.754)">Trasparenza</div>
<div class="t" style="left:152.13px;top:37px;font-size:5.6px;font-weight:400;color:#505050;transform:scaleX(0.769)">Bordi</div>
<div class="t" style="left:172.46px;top:37px;font-size:5.6px;font-weight:400;color:#505050;transform:scaleX(0.761)">Mostra</div>
<div class="t" style="left:169.03px;top:42px;font-size:5.6px;font-weight:400;color:#505050;transform:scaleX(0.761)">sezioni 3D</div>
<div class="t" style="left:196.11px;top:37px;font-size:5.6px;font-weight:400;color:#505050;transform:scaleX(0.770)">Mostra</div>
<div class="t" style="left:191.33px;top:42px;font-size:5.6px;font-weight:400;color:#505050;transform:scaleX(0.770)">superfici 3D</div>
<div class="t" style="left:220.32px;top:37px;font-size:5.6px;font-weight:400;color:#505050;transform:scaleX(0.757)">Importa</div>
<div class="t" style="left:219.73px;top:42px;font-size:5.6px;font-weight:400;color:#505050;transform:scaleX(0.757)">struttura</div>
<div class="t" style="left:242.40px;top:37px;font-size:5.6px;font-weight:400;color:#b4b4b4;transform:scaleX(0.775)">Sposta</div>
<div class="t" style="left:240.83px;top:42px;font-size:5.6px;font-weight:400;color:#b4b4b4;transform:scaleX(0.775)">su punto</div>
<div class="t" style="left:263.73px;top:37px;font-size:5.6px;font-weight:400;color:#505050;transform:scaleX(0.744)">Griglia</div>
<div class="t" style="left:278.73px;top:37px;font-size:5.6px;font-weight:400;color:#505050;transform:scaleX(0.746)">Coordinate</div>
<div class="t" style="left:281.99px;top:42px;font-size:5.6px;font-weight:400;color:#505050;transform:scaleX(0.746)">cursore</div>
<div class="t" style="left:305.44px;top:37px;font-size:5.6px;font-weight:400;color:#505050;transform:scaleX(0.716)">Misura</div>
<div class="t" style="left:324.34px;top:37px;font-size:5.6px;font-weight:400;color:#505050;transform:scaleX(0.725)">Seleziona</div>
<div class="t" style="left:328.85px;top:42px;font-size:5.6px;font-weight:400;color:#505050;transform:scaleX(0.725)">punti</div>
<div class="t" style="left:347.36px;top:37px;font-size:5.6px;font-weight:400;color:#b4b4b4;transform:scaleX(0.750)">Rimuovi</div>
<div class="t" style="left:345.03px;top:42px;font-size:5.6px;font-weight:400;color:#b4b4b4;transform:scaleX(0.750)">selezionati</div>
<div class="t" style="left:370.43px;top:37px;font-size:5.6px;font-weight:400;color:#505050;transform:scaleX(0.764)">Etichette</div>
<div class="t" style="left:391.23px;top:37px;font-size:5.6px;font-weight:400;color:#505050;transform:scaleX(0.740)">Punti</div>
<div class="t" style="left:404.83px;top:37px;font-size:5.6px;font-weight:400;color:#505050;transform:scaleX(0.763)">Sondaggi</div>
<div class="t" style="left:38.23px;top:51px;font-size:5.6px;font-weight:400;color:#505050;transform:scaleX(0.772)">Modello 3D</div>
<div class="t" style="left:148.84px;top:51px;font-size:5.6px;font-weight:400;color:#505050;transform:scaleX(0.726)">Visualizza</div>
<div class="t" style="left:231.03px;top:51px;font-size:5.6px;font-weight:400;color:#505050;transform:scaleX(0.762)">Strutture</div>
<div class="t" style="left:334.73px;top:51px;font-size:5.6px;font-weight:400;color:#505050;transform:scaleX(0.745)">Strumenti</div>
<div class="t" style="left:2.00px;top:61px;font-size:5.2px;font-weight:400;color:#ffffff;transform:scaleX(0.951)">Workspace</div>
<div class="a" style="left:0px;top:66.7px;width:132.7px;height:118.8px;overflow:hidden"><div class="a" style="left:0px;top:-66.7px;width:768px;height:407px"><div class="t" style="left:24.43px;top:68px;font-size:5.6px;font-weight:400;color:#222;transform:scaleX(0.771)">Sondaggio - S1</div></div></div>
<div class="a" style="left:0px;top:66.7px;width:132.7px;height:118.8px;overflow:hidden"><div class="a" style="left:0px;top:-66.7px;width:768px;height:407px"><div class="t" style="left:32.03px;top:75px;font-size:5.6px;font-weight:400;color:#222;transform:scaleX(0.756)">Risultati prova - S1</div></div></div>
<div class="a" style="left:0px;top:66.7px;width:132.7px;height:118.8px;overflow:hidden"><div class="a" style="left:0px;top:-66.7px;width:768px;height:407px"><div class="t" style="left:24.43px;top:81px;font-size:5.6px;font-weight:400;color:#222;transform:scaleX(0.771)">Sondaggio - S2</div></div></div>
<div class="a" style="left:0px;top:66.7px;width:132.7px;height:118.8px;overflow:hidden"><div class="a" style="left:0px;top:-66.7px;width:768px;height:407px"><div class="t" style="left:32.03px;top:87px;font-size:5.6px;font-weight:400;color:#222;transform:scaleX(0.756)">Risultati prova - S2</div></div></div>
<div class="a" style="left:0px;top:66.7px;width:132.7px;height:118.8px;overflow:hidden"><div class="a" style="left:0px;top:-66.7px;width:768px;height:407px"><div class="t" style="left:24.43px;top:94px;font-size:5.6px;font-weight:400;color:#222;transform:scaleX(0.771)">Sondaggio - S3</div></div></div>
<div class="a" style="left:0px;top:66.7px;width:132.7px;height:118.8px;overflow:hidden"><div class="a" style="left:0px;top:-66.7px;width:768px;height:407px"><div class="t" style="left:32.03px;top:100px;font-size:5.6px;font-weight:400;color:#222;transform:scaleX(0.756)">Risultati prova - S3</div></div></div>
<div class="a" style="left:0px;top:66.7px;width:132.7px;height:118.8px;overflow:hidden"><div class="a" style="left:0px;top:-66.7px;width:768px;height:407px"><div class="t" style="left:17.04px;top:107px;font-size:5.6px;font-weight:400;color:#222;transform:scaleX(0.729)">Strati</div></div></div>
<div class="a" style="left:0px;top:66.7px;width:132.7px;height:118.8px;overflow:hidden"><div class="a" style="left:0px;top:-66.7px;width:768px;height:407px"><div class="t" style="left:24.43px;top:113px;font-size:5.6px;font-weight:400;color:#222;transform:scaleX(0.768)">Strato 1</div></div></div>
<div class="a" style="left:0px;top:66.7px;width:132.7px;height:118.8px;overflow:hidden"><div class="a" style="left:0px;top:-66.7px;width:768px;height:407px"><div class="t" style="left:24.43px;top:119px;font-size:5.6px;font-weight:400;color:#222;transform:scaleX(0.768)">Strato 2</div></div></div>
<div class="a" style="left:0px;top:66.7px;width:132.7px;height:118.8px;overflow:hidden"><div class="a" style="left:0px;top:-66.7px;width:768px;height:407px"><div class="t" style="left:24.43px;top:126px;font-size:5.6px;font-weight:400;color:#222;transform:scaleX(0.768)">Strato 3</div></div></div>
<div class="a" style="left:0px;top:66.7px;width:132.7px;height:118.8px;overflow:hidden"><div class="a" style="left:0px;top:-66.7px;width:768px;height:407px"><div class="t" style="left:24.43px;top:132px;font-size:5.6px;font-weight:400;color:#222;transform:scaleX(0.768)">Strato 4</div></div></div>
<div class="a" style="left:0px;top:66.7px;width:132.7px;height:118.8px;overflow:hidden"><div class="a" style="left:0px;top:-66.7px;width:768px;height:407px"><div class="t" style="left:24.43px;top:138px;font-size:5.6px;font-weight:400;color:#222;transform:scaleX(0.768)">Strato 5</div></div></div>
<div class="a" style="left:0px;top:66.7px;width:132.7px;height:118.8px;overflow:hidden"><div class="a" style="left:0px;top:-66.7px;width:768px;height:407px"><div class="t" style="left:24.43px;top:145px;font-size:5.6px;font-weight:400;color:#222;transform:scaleX(0.768)">Strato 6</div></div></div>
<div class="a" style="left:0px;top:66.7px;width:132.7px;height:118.8px;overflow:hidden"><div class="a" style="left:0px;top:-66.7px;width:768px;height:407px"><div class="t" style="left:17.03px;top:151px;font-size:5.6px;font-weight:400;color:#222;transform:scaleX(0.762)">Strutture</div></div></div>
<div class="a" style="left:0px;top:66.7px;width:132.7px;height:118.8px;overflow:hidden"><div class="a" style="left:0px;top:-66.7px;width:768px;height:407px"><div class="t" style="left:24.43px;top:158px;font-size:5.6px;font-weight:400;color:#222;transform:scaleX(0.773)">Modello_1</div></div></div>
<div class="a" style="left:0px;top:66.7px;width:132.7px;height:118.8px;overflow:hidden"><div class="a" style="left:0px;top:-66.7px;width:768px;height:407px"><div class="t" style="left:17.03px;top:164px;font-size:5.6px;font-weight:400;color:#222;transform:scaleX(0.754)">Sezioni</div></div></div>
<div class="a" style="left:0px;top:66.7px;width:132.7px;height:118.8px;overflow:hidden"><div class="a" style="left:0px;top:-66.7px;width:768px;height:407px"><div class="t" style="left:24.43px;top:170px;font-size:5.6px;font-weight:400;color:#222;transform:scaleX(0.759)">Mostra tutte</div></div></div>
<div class="a" style="left:0px;top:66.7px;width:132.7px;height:118.8px;overflow:hidden"><div class="a" style="left:0px;top:-66.7px;width:768px;height:407px"><div class="t" style="left:24.43px;top:177px;font-size:5.6px;font-weight:400;color:#222;transform:scaleX(0.753)">Sezione 1</div></div></div>
<div class="a" style="left:0px;top:66.7px;width:132.7px;height:118.8px;overflow:hidden"><div class="a" style="left:0px;top:-66.7px;width:768px;height:407px"><div class="t" style="left:24.43px;top:183px;font-size:5.6px;font-weight:400;color:#222;transform:scaleX(0.753)">Sezione 2</div></div></div>
<div class="t" style="left:2.00px;top:190px;font-size:5.2px;font-weight:400;color:#ffffff;transform:scaleX(0.978)">Dettagli</div>
<div class="t" style="left:6.63px;top:200px;font-size:5.0px;font-weight:400;color:#333;transform:scaleX(0.859)">Modello</div>
<div class="t" style="left:14.41px;top:208px;font-size:5.4px;font-weight:700;color:#111;transform:scaleX(0.888)">Layer</div>
<div class="t" style="left:14.43px;top:214px;font-size:5.4px;font-weight:400;color:#333;transform:scaleX(0.784)">Layer principale</div>
<div class="t" style="left:67.61px;top:214px;font-size:5.4px;font-weight:700;color:#111;transform:scaleX(0.873)">LayerModello_1</div>
<div class="t" style="left:14.43px;top:220px;font-size:5.4px;font-weight:400;color:#333;transform:scaleX(0.770)">Tutti</div>
<div class="t" style="left:67.60px;top:220px;font-size:5.4px;font-weight:700;color:#111;transform:scaleX(0.925)">(Raccolta)</div>
<div class="t" style="left:14.40px;top:227px;font-size:5.4px;font-weight:700;color:#111;transform:scaleX(0.933)">Punti 3D</div>
<div class="t" style="left:14.43px;top:233px;font-size:5.4px;font-weight:400;color:#999;transform:scaleX(0.771)">Origine modello</div>
<div class="t" style="left:67.63px;top:233px;font-size:5.4px;font-weight:400;color:#999;transform:scaleX(0.798)">32.8, -23.05, 0.49</div>
<div class="t" style="left:14.43px;top:240px;font-size:5.4px;font-weight:400;color:#999;transform:scaleX(0.803)">Punto click</div>
<div class="t" style="left:14.43px;top:246px;font-size:5.4px;font-weight:400;color:#999;transform:scaleX(0.785)">Punto finale spostamento</div>
<div class="t" style="left:14.40px;top:252px;font-size:5.4px;font-weight:700;color:#111;transform:scaleX(0.947)">Varie</div>
<div class="t" style="left:14.43px;top:259px;font-size:5.4px;font-weight:400;color:#333;transform:scaleX(0.781)">Nome</div>
<div class="t" style="left:67.61px;top:259px;font-size:5.4px;font-weight:700;color:#111;transform:scaleX(0.887)">Modello_1</div>
<div class="t" style="left:14.45px;top:265px;font-size:5.4px;font-weight:400;color:#999;transform:scaleX(0.694)">Numero elementi</div>
<div class="t" style="left:67.62px;top:265px;font-size:5.4px;font-weight:400;color:#999;transform:scaleX(0.839)">1608</div>
<div class="t" style="left:6.41px;top:368px;font-size:5.4px;font-weight:700;color:#111;transform:scaleX(0.864)">Origine modello</div>
<div class="t" style="left:6.43px;top:374px;font-size:5.4px;font-weight:400;color:#333;transform:scaleX(0.773)">Punto di origine del sistema di riferimento locale del modello.</div>
<div class="t" style="left:2.72px;top:401px;font-size:5.4px;font-weight:400;color:#222;transform:scaleX(0.812)">X: 22.72   Y: -17.34   Z: 0.76</div>
<div class="t" style="left:92.53px;top:400px;font-size:5.4px;font-weight:400;color:#222;transform:scaleX(0.785)">Questa barra può essere usata come scorciatoia per eseguire alcuni comandi.</div>
<div class="t" style="left:263.02px;top:401px;font-size:5.0px;font-weight:400;color:#ffffff;transform:scaleX(0.879)">GEOSTRU</div>
<div class="t" style="left:678.23px;top:401px;font-size:5.0px;font-weight:400;color:#ffffff;transform:scaleX(0.853)">GeoStru GM3D 2019.2.17.25 (FULL)</div>
<div class="t" style="left:762.63px;top:401px;font-size:5.0px;font-weight:400;color:#ffffff;transform:scaleX(0.864)">IT</div>
</body></html>
